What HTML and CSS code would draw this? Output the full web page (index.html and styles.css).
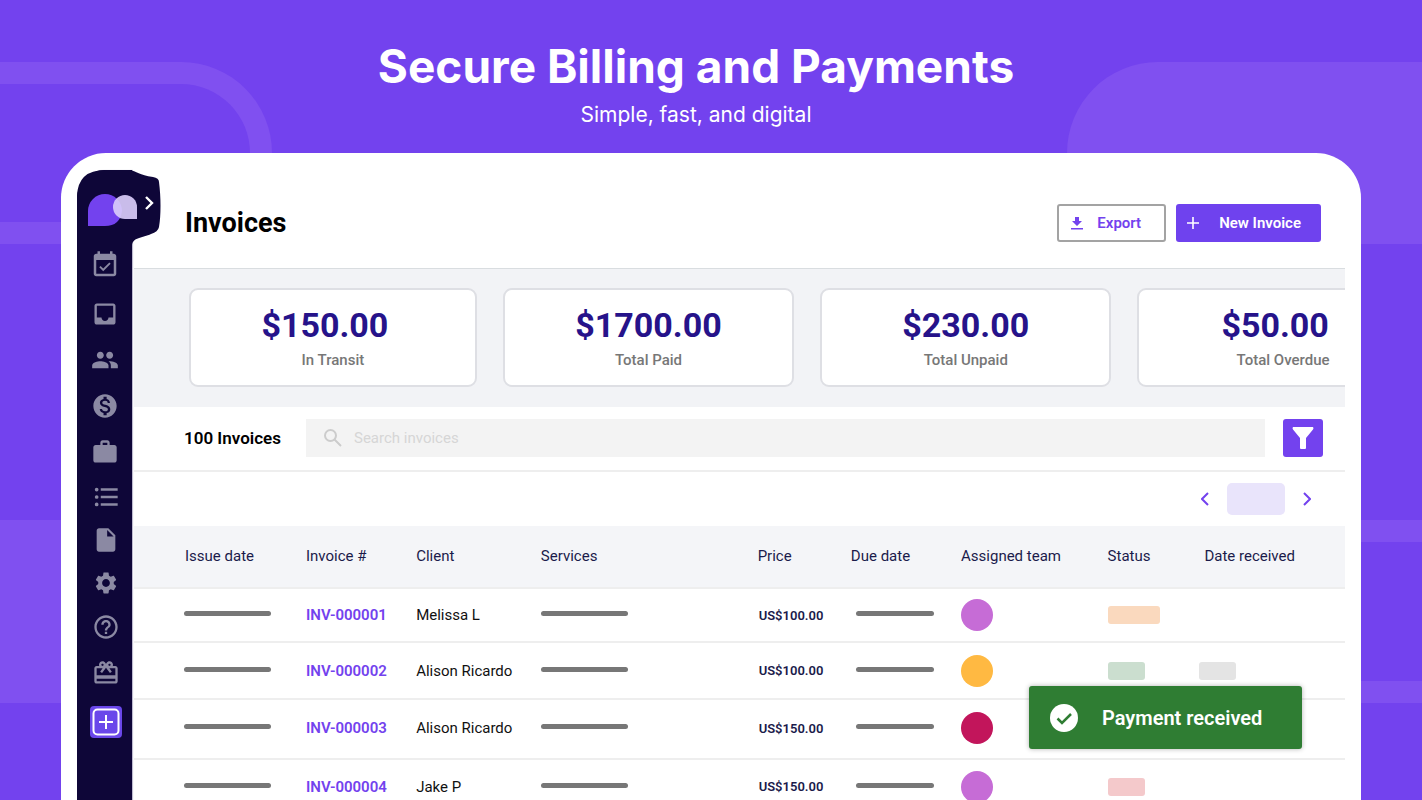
FILE: index.html
```html
<!DOCTYPE html>
<html lang="en">
<head>
    <meta charset="UTF-8">
    <meta name="viewport" content="width=device-width, initial-scale=1.0">
    <title>Secure Billing and Payments</title>
    <link rel="stylesheet" href="styles.css">
</head>
<body>
    <div class="page">
        <!-- Background shapes -->
        <div class="shape ring-left"></div>
        <div class="shape block-left"></div>
        <div class="shape block-right"></div>
        <div class="shape ring-right"></div>

        <header class="hero">
            <h1>Secure Billing and Payments</h1>
            <p>Simple, fast, and digital</p>
        </header>

        <div class="panel">
            <nav class="sidebar" aria-label="Main">
                <svg class="sidebar-tab" viewBox="0 0 84 100" aria-hidden="true">
                    <path fill="#0e0638" d="M0 26Q1 0 28 0H52C60 1 62 5 76 7Q82 8 82 12C84 28 84 45 82 57Q81 62 74 64C66 68 55 67 55 76V100H0Z"/>
                    <path fill="#7342ee" d="M11 56V41A17 17 0 0 1 45 41Q43 56 28 56Z"/>
                    <path fill="#d9ccfa" fill-opacity=".92" d="M60 49V37A12 12 0 1 0 48 49Z"/>
                    <path fill="none" stroke="#fff" stroke-width="2.4" d="M69 27L75 33L69 39"/>
                </svg>
                <ul class="nav-list">
                    <li><a href="#" aria-label="Calendar"><svg class="icon-lg" viewBox="0 0 24 24"><path d="M16.53 11.06L15.47 10l-4.88 4.88-2.12-2.12-1.06 1.06L10.59 17l5.94-5.94zM19 3h-1V1h-2v2H8V1H6v2H5c-1.11 0-1.99.9-1.99 2L3 19c0 1.1.89 2 2 2h14c1.1 0 2-.9 2-2V5c0-1.1-.9-2-2-2zm0 16H5V8h14v11z"/></svg></a></li>
                    <li><a href="#" aria-label="Inbox"><svg viewBox="0 0 24 24"><path d="M19 3H5c-1.1 0-2 .9-2 2v14c0 1.1.9 2 2 2h14c1.1 0 2-.9 2-2V5c0-1.1-.9-2-2-2zm0 12h-4c0 1.66-1.35 3-3 3s-3-1.34-3-3H5V5h14v10z"/></svg></a></li>
                    <li><a href="#" aria-label="Clients"><svg viewBox="0 0 24 24"><path d="M16 11c1.66 0 2.99-1.34 2.99-3S17.66 5 16 5s-3 1.34-3 3 1.34 3 3 3zm-8 0c1.66 0 2.99-1.34 2.99-3S9.66 5 8 5 5 6.34 5 8s1.34 3 3 3zm0 2c-2.33 0-7 1.17-7 3.5V19h14v-2.5c0-2.33-4.67-3.5-7-3.5zm8 0c-.29 0-.62.02-.97.05 1.16.84 1.97 1.97 1.97 3.45V19h6v-2.5c0-2.33-4.67-3.5-7-3.5z"/></svg></a></li>
                    <li><a href="#" aria-label="Billing"><svg viewBox="0 0 24 24"><path d="M12 2C6.48 2 2 6.48 2 12s4.48 10 10 10 10-4.48 10-10S17.52 2 12 2zm1.41 16.09V20h-2.67v-1.93c-1.71-.36-3.16-1.46-3.27-3.4h1.96c.1 1.05.82 1.87 2.65 1.87 1.96 0 2.4-.98 2.4-1.59 0-.83-.44-1.61-2.67-2.14-2.48-.6-4.18-1.62-4.18-3.67 0-1.72 1.39-2.84 3.11-3.21V4h2.67v1.95c1.86.45 2.79 1.86 2.85 3.39H14.3c-.05-1.11-.64-1.87-2.22-1.87-1.5 0-2.4.68-2.4 1.64 0 .84.65 1.39 2.67 1.91s4.18 1.39 4.18 3.91c-.01 1.83-1.38 2.83-3.12 3.16z"/></svg></a></li>
                    <li><a href="#" aria-label="Services"><svg viewBox="0 0 24 24"><path d="M20 6h-4V4c0-1.11-.89-2-2-2h-4c-1.11 0-2 .89-2 2v2H4c-1.11 0-2 .89-2 2v11c0 1.11.89 2 2 2h16c1.11 0 2-.89 2-2V8c0-1.11-.89-2-2-2zm-6 0h-4V4h4v2z"/></svg></a></li>
                    <li><a href="#" aria-label="Lists"><svg viewBox="0 0 24 24"><path d="M4 4a1.6 1.6 0 1 0 0 3.200A1.600 1.600 0 0 0 4 4zm0 6.400a1.600 1.600 0 1 0 0 3.200 1.600 1.600 0 0 0 0-3.200zm0 6.400A1.600 1.600 0 1 0 4 20a1.600 1.600 0 0 0 0-3.200zM7.500 4.600h14.500v2H7.500zm0 6.400h14.500v2H7.500zm0 6.400h14.500v2H7.500z"/></svg></a></li>
                    <li><a href="#" aria-label="Documents"><svg viewBox="0 0 24 24"><path d="M6 2c-1.100 0-2 .9-2 2v16c0 1.100.9 2 2 2h12c1.100 0 2-.9 2-2V8l-6-6H6zm7 7V3.500L18.500 9H13z"/></svg></a></li>
                    <li><a href="#" aria-label="Settings"><svg class="icon-sm" viewBox="0 0 24 24"><path d="M19.140 12.940c.04-.3.060-.610.060-.940 0-.320-.020-.640-.070-.940l2.030-1.580c.180-.140.230-.410.120-.610l-1.920-3.320c-.120-.220-.370-.290-.590-.220l-2.390.960c-.5-.380-1.030-.7-1.620-.940l-.360-2.540c-.040-.240-.240-.410-.480-.410h-3.840c-.240 0-.430.170-.470.410l-.360 2.540c-.590.240-1.130.570-1.620.940l-2.390-.960c-.220-.080-.470 0-.590.220L2.740 8.870c-.120.210-.080.470.120.610l2.030 1.580c-.050.3-.090.630-.090.940s.020.640.070.940l-2.030 1.580c-.180.140-.230.410-.120.610l1.920 3.320c.120.220.370.290.590.220l2.390-.960c.5.380 1.030.7 1.620.940l.360 2.540c.050.240.240.410.480.410h3.840c.240 0 .440-.170.470-.410l.360-2.540c.590-.240 1.130-.560 1.620-.940l2.390.960c.220.080.470 0 .590-.220l1.920-3.320c.120-.220.070-.470-.120-.610l-2.010-1.580zM12 15.600c-1.980 0-3.600-1.620-3.600-3.600s1.620-3.600 3.600-3.600 3.600 1.620 3.600 3.600-1.620 3.600-3.600 3.600z"/></svg></a></li>
                    <li><a href="#" aria-label="Help"><svg viewBox="0 0 24 24"><path d="M11 18h2v-2h-2v2zm1-16C6.480 2 2 6.480 2 12s4.480 10 10 10 10-4.480 10-10S17.520 2 12 2zm0 18c-4.410 0-8-3.590-8-8s3.590-8 8-8 8 3.590 8 8-3.590 8-8 8zm0-14c-2.210 0-4 1.790-4 4h2c0-1.100.9-2 2-2s2 .9 2 2c0 2-3 1.750-3 5h2c0-2.250 3-2.500 3-5 0-2.210-1.790-4-4-4z"/></svg></a></li>
                    <li><a href="#" aria-label="Rewards"><svg viewBox="0 0 24 24"><path d="M20 6h-2.180c.110-.310.180-.650.180-1 0-1.660-1.340-3-3-3-1.050 0-1.960.540-2.500 1.350l-.5.670-.5-.680C10.960 2.540 10.050 2 9 2 7.340 2 6 3.340 6 5c0 .350.070.690.180 1H4c-1.110 0-1.990.890-1.990 2L2 19c0 1.110.890 2 2 2h16c1.110 0 2-.890 2-2V8c0-1.110-.890-2-2-2zm-5-2c.550 0 1 .450 1 1s-.450 1-1 1-1-.450-1-1 .450-1 1-1zM9 4c.550 0 1 .450 1 1s-.450 1-1 1-1-.450-1-1 .450-1 1-1zm11 15H4v-2h16v2zm0-5H4V8h5.080L7 10.830 8.620 12 12 7.400l3.380 4.600L17 10.830 14.920 8H20v6z"/></svg></a></li>
                    <li><button type="button" class="add-btn" aria-label="Add"><svg viewBox="0 0 32 32"><rect x="3.500" y="3.500" width="25" height="25" rx="4"/><path d="M16 9v14M9 16h14"/></svg></button></li>
                </ul>
            </nav>

            <main class="content">
                <div class="title-bar">
                    <h2>Invoices</h2>
                    <div class="actions">
                        <button type="button" class="btn btn-outline">
                            <svg viewBox="0 0 12 14"><path d="M4 1h4v4h3L6 10 1 5h3zM0 12h12v1.500H0z"/></svg>
                            Export
                        </button>
                        <button type="button" class="btn btn-primary">
                            <svg viewBox="0 0 12 12"><path d="M5.200 0h1.600v5.200H12v1.600H6.800V12H5.200V6.800H0V5.200h5.200z"/></svg>
                            New Invoice
                        </button>
                    </div>
                </div>

                <section class="stats">
                    <div class="stat">
                        <strong class="amount-side">$150.00</strong>
                        <span>In Transit</span>
                    </div>
                    <div class="stat">
                        <strong>$1700.00</strong>
                        <span>Total Paid</span>
                    </div>
                    <div class="stat">
                        <strong>$230.00</strong>
                        <span>Total Unpaid</span>
                    </div>
                    <div class="stat">
                        <strong class="amount-side">$50.00</strong>
                        <span>Total Overdue</span>
                    </div>
                </section>

                <div class="toolbar">
                    <label class="count" for="search">100 Invoices</label>
                    <div class="search">
                        <svg viewBox="0 0 18 18"><circle cx="6.500" cy="6.500" r="5.500"/><path d="M10.500 10.500L17 17"/></svg>
                        <input type="text" id="search" placeholder="Search invoices">
                    </div>
                    <button type="button" class="filter-btn" aria-label="Filter">
                        <svg viewBox="0 0 22 22"><path d="M1 0h20q1 1 0 2.500L14 11v10q0 1-1 1H9q-1 0-1-1V11L1 2.500Q0 1 1 0z"/></svg>
                    </button>
                </div>

                <div class="pager">
                    <button type="button" aria-label="Previous page"><svg viewBox="0 0 8 14"><path d="M7 1L1 7l6 6"/></svg></button>
                    <span class="page-pill"></span>
                    <button type="button" aria-label="Next page"><svg viewBox="0 0 8 14"><path d="M1 1l6 6-6 6"/></svg></button>
                </div>

                <table class="invoices">
                    <colgroup>
                        <col class="col-issue"><col class="col-number"><col class="col-client">
                        <col class="col-services"><col class="col-price"><col class="col-due">
                        <col class="col-team"><col class="col-status"><col>
                    </colgroup>
                    <thead>
                        <tr>
                            <th>Issue date</th>
                            <th>Invoice #</th>
                            <th>Client</th>
                            <th>Services</th>
                            <th>Price</th>
                            <th>Due date</th>
                            <th>Assigned team</th>
                            <th>Status</th>
                            <th>Date received</th>
                        </tr>
                    </thead>
                    <tbody>
                        <tr>
                            <td><span class="line"></span></td>
                            <td><a href="#">INV-000001</a></td>
                            <td>Melissa L</td>
                            <td><span class="line"></span></td>
                            <td class="price">US$100.00</td>
                            <td><span class="line line-due"></span></td>
                            <td><span class="avatar violet"></span></td>
                            <td><span class="tag tag-pending"></span></td>
                            <td></td>
                        </tr>
                        <tr>
                            <td><span class="line"></span></td>
                            <td><a href="#">INV-000002</a></td>
                            <td>Alison Ricardo</td>
                            <td><span class="line"></span></td>
                            <td class="price">US$100.00</td>
                            <td><span class="line line-due"></span></td>
                            <td><span class="avatar amber"></span></td>
                            <td><span class="tag tag-paid"></span></td>
                            <td><span class="tag tag-date"></span></td>
                        </tr>
                        <tr>
                            <td><span class="line"></span></td>
                            <td><a href="#">INV-000003</a></td>
                            <td>Alison Ricardo</td>
                            <td><span class="line"></span></td>
                            <td class="price">US$150.00</td>
                            <td><span class="line line-due"></span></td>
                            <td><span class="avatar crimson"></span></td>
                            <td></td>
                            <td></td>
                        </tr>
                        <tr>
                            <td><span class="line"></span></td>
                            <td><a href="#">INV-000004</a></td>
                            <td>Jake P</td>
                            <td><span class="line"></span></td>
                            <td class="price">US$150.00</td>
                            <td><span class="line line-due"></span></td>
                            <td><span class="avatar violet"></span></td>
                            <td><span class="tag tag-overdue"></span></td>
                            <td></td>
                        </tr>
                    </tbody>
                </table>
            </main>
        </div>

        <div class="toast" role="status">
            <svg viewBox="0 0 28 28"><circle cx="14" cy="14" r="14" fill="#fff"/><path d="M7.500 14.500l4.500 4.500 9-9" fill="none" stroke="#2f7d33" stroke-width="2.500"/></svg>
            Payment received
        </div>
    </div>
</body>
</html>
```
FILE: styles.css
```css
* {
    box-sizing: border-box;
}

body {
    margin: 0;
    font-family: Roboto, "Liberation Sans", sans-serif;
    font-size: 15px;
    color: #111;
}

button {
    font-family: inherit;
    cursor: pointer;
}

.page {
    position: relative;
    height: 100vh;
    overflow: hidden;
    padding: 0 61px;
    background-color: #7342ee;
}

/* Background shapes */
.shape {
    position: absolute;
}

.ring-left {
    left: 0;
    top: 62px;
    width: 272px;
    height: 182px;
    border: 22px solid #8050f0;
    border-left: none;
    border-radius: 0 91px 91px 0;
}

.block-left {
    left: 0;
    top: 520px;
    width: 200px;
    height: 183px;
    background-color: #8050f0;
}

.block-right {
    right: 0;
    top: 62px;
    width: 355px;
    height: 182px;
    background-color: #8050f0;
    border-radius: 91px 0 0 91px;
}

.ring-right {
    right: 0;
    top: 520px;
    width: 300px;
    height: 183px;
    border: 22px solid #8050f0;
    border-right: none;
    border-radius: 91px 0 0 91px;
}

/* Hero */
.hero {
    position: relative;
    height: 153px;
    padding: 39px 30px 0 0;
    text-align: center;
    color: #fff;
    font-family: Inter, "Liberation Sans", sans-serif;
}

.hero h1 {
    margin: 0;
    font-size: 46px;
    line-height: 54px;
    font-weight: 700;
}

.hero p {
    margin: 8px 0 0;
    font-size: 21px;
    line-height: 28px;
}

/* Panel */
.panel {
    position: relative;
    display: flex;
    gap: 2px;
    min-height: 100%;
    padding: 17px 16px 0;
    background-color: #fff;
    border-radius: 45px 45px 0 0;
}

.sidebar {
    position: relative;
    flex: 0 0 55px;
    padding-top: 69px;
    background-color: #0e0638;
    border-radius: 28px 0 0 0;
    box-shadow: 1px 0 1px #b9b5cc;
}

.sidebar-tab {
    position: absolute;
    left: 0;
    top: 0;
    width: 84px;
    height: 100px;
}

.nav-list {
    position: relative;
    list-style: none;
    margin: 0;
    padding: 0;
}

.nav-list li {
    display: flex;
    justify-content: center;
    align-items: center;
    height: 46px;
    padding-left: 2px;
}

.nav-list li:first-child,
.nav-list li:last-child {
    height: 52px;
}

.nav-list li:nth-child(-n+5) {
    padding-left: 0;
}

.nav-list li:nth-child(6),
.nav-list li:nth-child(7),
.nav-list li:nth-child(8) {
    height: 43px;
}

.nav-list a {
    display: flex;
}

.nav-list svg {
    width: 28px;
    height: 28px;
    fill: #8b89a3;
}

.nav-list .icon-lg {
    width: 30px;
    height: 30px;
}

.nav-list .icon-sm {
    width: 26px;
    height: 26px;
}

.nav-list .add-btn {
    display: flex;
    padding: 0;
    border: none;
    border-radius: 4px;
    background-color: #6a47ea;
}

.nav-list .add-btn svg {
    width: 32px;
    height: 32px;
    fill: none;
    stroke: #fff;
    stroke-width: 2;
}

.content {
    flex: 1;
    min-width: 0;
    overflow: hidden;
}

/* Title bar */
.title-bar {
    display: flex;
    justify-content: space-between;
    align-items: center;
    height: 99px;
    padding: 8px 24px 0 51px;
    border-bottom: 1px solid #d9dde0;
}

.title-bar h2 {
    margin: 0;
    font-size: 27px;
    line-height: 32px;
    font-weight: 700;
    color: #000;
}

.actions {
    display: flex;
    gap: 10px;
}

.btn {
    display: flex;
    align-items: center;
    height: 38px;
    border-radius: 3px;
    font-size: 15px;
    font-weight: 600;
}

.btn svg {
    width: 12px;
    height: 14px;
    fill: currentColor;
}

.btn-outline {
    gap: 14px;
    padding: 0 23px 0 12px;
    border: 2px solid #a3a3a3;
    background-color: #fff;
    color: #7342ee;
}

.btn-primary {
    gap: 20px;
    padding: 0 20px 0 11px;
    border: none;
    background-color: #6f42ee;
    color: #fff;
}

/* Stats */
.stats {
    display: grid;
    grid-template-columns: 24.9% repeat(3, 25.2%);
    gap: 26px;
    padding: 19px 0 20px 55px;
    background-color: #f2f3f6;
}

.stat {
    display: flex;
    flex-direction: column;
    align-items: center;
    height: 99px;
    padding-top: 15px;
    background-color: #fff;
    border: 2px solid #dedfe4;
    border-radius: 9px;
}

.stat strong {
    font-size: 34px;
    line-height: 40px;
    color: #26138a;
}

.stat .amount-side {
    padding-right: 16px;
}

.stat span {
    margin-top: 5px;
    font-size: 15px;
    line-height: 20px;
    font-weight: 500;
    color: #777;
}

/* Toolbar */
.toolbar {
    display: flex;
    align-items: center;
    padding: 12px 22px 13px 50px;
    border-bottom: 2px solid #eee;
}

.count {
    flex: 0 0 122px;
    font-size: 17px;
    font-weight: 600;
    color: #000;
}

.search {
    flex: 1;
    display: flex;
    align-items: center;
    gap: 12px;
    height: 38px;
    margin-right: 18px;
    padding: 0 18px;
    background-color: #f3f3f3;
}

.search svg {
    width: 18px;
    height: 18px;
    fill: none;
    stroke: #ccc;
    stroke-width: 2;
}

.search input {
    flex: 1;
    padding: 0;
    border: none;
    outline: none;
    background: none;
    font-family: inherit;
    font-size: 15px;
}

.search input::placeholder {
    color: #d6d6d6;
}

.filter-btn {
    display: flex;
    justify-content: center;
    align-items: center;
    width: 40px;
    height: 38px;
    padding: 0;
    border: none;
    border-radius: 3px;
    background-color: #7342ee;
}

.filter-btn svg {
    width: 22px;
    height: 22px;
    fill: #fff;
}

/* Pager */
.pager {
    display: flex;
    justify-content: flex-end;
    align-items: center;
    gap: 18px;
    height: 54px;
    padding-right: 34px;
}

.pager button {
    display: flex;
    padding: 0;
    border: none;
    background: none;
}

.pager svg {
    width: 8px;
    height: 14px;
    fill: none;
    stroke: #7342ee;
    stroke-width: 2;
}

.page-pill {
    width: 58px;
    height: 32px;
    border-radius: 5px;
    background-color: #e9e4fb;
}

/* Invoice table */
.invoices {
    width: 100%;
    table-layout: fixed;
    border-collapse: separate;
    border-spacing: 0;
}

.col-issue {
    width: 14.2%;
}

.col-number,
.col-due {
    width: 9.1%;
}

.col-client {
    width: 10.3%;
}

.col-services {
    width: 17.9%;
}

.col-price {
    width: 7.7%;
}

.col-team {
    width: 12.1%;
}

.col-status {
    width: 8%;
}

.invoices th,
.invoices td {
    padding: 0;
    text-align: left;
    white-space: nowrap;
    border-bottom: 2px solid #eee;
}

.invoices th {
    height: 63px;
    padding-bottom: 2px;
    font-weight: 400;
    color: #1b1b4b;
    background-color: #f4f5f8;
}

.invoices td {
    height: 57px;
}

.invoices tr:first-child td {
    height: 54px;
}

.invoices tr:nth-child(3) td {
    height: 60px;
}

.invoices tr:nth-child(n+3) td {
    padding-bottom: 2px;
}

.invoices th:first-child {
    padding-left: 51px;
}

.invoices td:first-child {
    padding-left: 50px;
}

.invoices a {
    font-weight: 600;
    color: #7342ee;
    text-decoration: none;
}

.invoices .price {
    font-size: 13px;
    font-weight: 600;
    color: #1b1b4b;
    padding-left: 1px;
}

.line {
    display: block;
    width: 87px;
    height: 5px;
    margin-bottom: 3px;
    border-radius: 3px;
    background-color: #777;
}

.line-due {
    width: 78px;
    margin-left: 5px;
}

.avatar {
    display: block;
    width: 32px;
    height: 32px;
    border-radius: 50%;
}

.violet {
    background-color: #c66cd6;
}

.amber {
    background-color: #ffb942;
}

.crimson {
    background-color: #c2155b;
}

.tag {
    display: block;
    width: 37px;
    height: 18px;
    border-radius: 3px;
}

.tag-pending {
    width: 52px;
    background-color: #fad9be;
}

.tag-paid {
    background-color: #cbdecf;
}

.tag-overdue {
    background-color: #f4c9cb;
}

.tag-date {
    margin-left: -5px;
    background-color: #e4e4e4;
}

/* Toast */
.toast {
    position: absolute;
    right: 120px;
    bottom: 51px;
    display: flex;
    align-items: center;
    gap: 24px;
    width: 273px;
    height: 63px;
    padding-left: 21px;
    border-radius: 3px;
    background-color: #2f7d33;
    box-shadow: 0 0 5px rgba(0, 0, 0, 0.3);
    color: #fff;
    font-size: 20px;
    font-weight: 600;
}

.toast svg {
    width: 28px;
    height: 28px;
}
```
